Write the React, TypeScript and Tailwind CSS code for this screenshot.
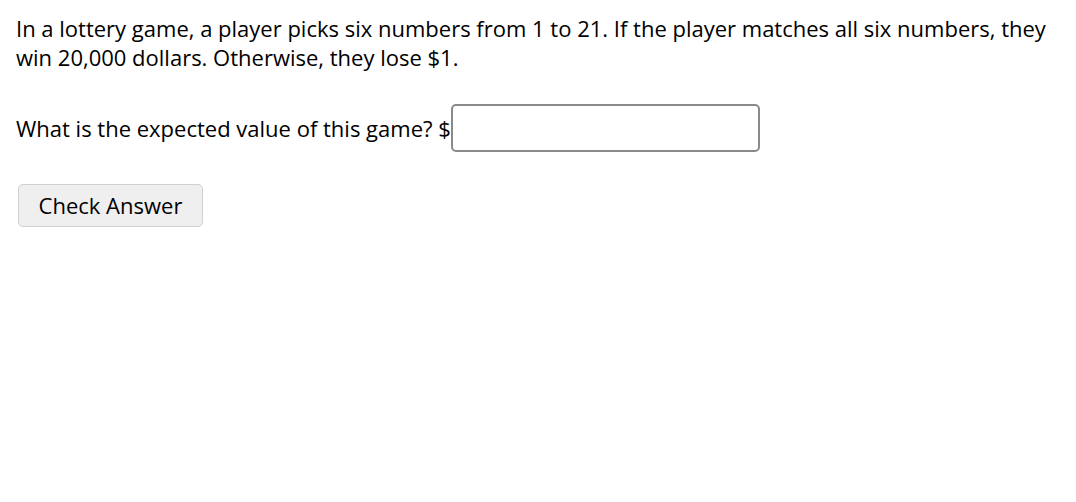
export default function App() {
  return (
    <main
      className="min-h-screen w-full bg-white px-4 pt-[14px] text-[22px] leading-[29px] text-black"
      style={{ fontFamily: '"Open Sans", sans-serif' }}
    >
      <p>
        In a lottery game, a player picks six numbers from 1 to 21. If the player matches all six numbers, they
        win 20,000 dollars. Otherwise, they lose $1.
      </p>

      <div className="mt-[32px] flex items-center">
        <span>What is the expected value of this game? $</span>
        <input
          type="text"
          className="h-[48px] w-[309px] rounded-[5px] border-2 border-[#8a8a8a] bg-white px-2 outline-none"
        />
      </div>

      <button
        type="button"
        className="ml-[2px] mt-[32px] h-[43px] w-[185px] rounded-[5px] border border-[#d0d0d0] bg-[#efefef] text-[22px] text-black"
      >
        Check Answer
      </button>
    </main>
  );
}
